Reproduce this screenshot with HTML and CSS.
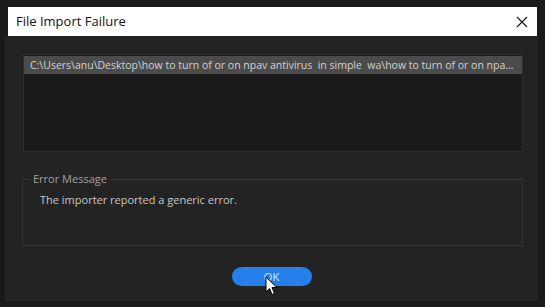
FILE: index.html
```html
<!DOCTYPE html>
<html>
<head>
<meta charset="utf-8">
<link rel="stylesheet" href="styles.css">
</head>
<body>
<div class="screen">
  <div class="titlebar">
    <span class="title">File Import Failure</span>
    <svg class="close" width="12" height="12" viewBox="0 0 12 12"><path d="M1 1L11 11M11 1L1 11" stroke="#111" stroke-width="1.1" fill="none"/></svg>
  </div>
  <div class="panel">
    <div class="list">
      <div class="row sel">C:\Users\anu\Desktop\how to turn of or on npav antivirus&nbsp; in simple&nbsp; wa\how to turn of or on npa...</div>
    </div>
    <fieldset class="group">
      <legend>Error Message</legend>
      <div class="msg">The importer reported a generic error.</div>
    </fieldset>
    <div class="actions">
      <div class="btnwrap">
        <button class="ok">OK</button>
        <svg class="cursor" width="14" height="20" viewBox="0 0 14 20"><path d="M1 1L1 16L4.5 12.5L7 18.5L9.5 17.5L7 11.5L12 11.5Z" fill="#fff" stroke="#000" stroke-width="1"/></svg>
      </div>
    </div>
  </div>
</div>
</body>
</html>
```
FILE: styles.css
```css
html, body {
  margin: 0;
  padding: 0;
  background: #1b1b1b;
  width: 545px;
  height: 307px;
  overflow: hidden;
  font-family: "Open Sans", "Noto Sans", sans-serif;
}
.screen {
  padding: 7px 8px 0 8px;
  display: flex;
  flex-direction: column;
}
.titlebar {
  height: 29px;
  background: #fff;
  display: flex;
  align-items: center;
  justify-content: space-between;
  padding: 0 9px 0 8px;
}
.title {
  font-size: 13px;
  color: #111;
  margin-top: -1px;
}
.close {
  display: block;
}
.panel {
  background: #232323;
  margin: 0 -1px 0 -3px;
  height: 265px;
  padding: 18px 15px 0 18px;
  box-sizing: border-box;
  display: flex;
  flex-direction: column;
}
.list {
  height: 98px;
  background: #1b1b1b;
  border: 1px solid #2c2c2c;
  box-sizing: border-box;
  padding: 1px 0 0 0;
}
.row {
  height: 18px;
  line-height: 18px;
  font-size: 10.5px;
  padding-left: 6px;
  color: #d2d2d2;
  white-space: nowrap;
  overflow: hidden;
}
.sel {
  background: #4b4b4b;
}
.group {
  margin: 20px 0 0 -1px;
  padding: 0 0 0 16px;
  height: 74px;
  box-sizing: border-box;
  border: 1px solid #343434;
  border-top-color: #3a3a3a;
}
.group legend {
  font-size: 11px;
  color: #a2a2a2;
  padding: 0 3px;
  margin-left: -9px;
  line-height: 14px;
}
.msg {
  font-size: 11px;
  color: #c6c6c6;
  margin-top: 6px;
  padding-left: 1px;
}
.actions {
  display: flex;
  justify-content: center;
  margin-top: 18px;
  padding-right: 3px;
}
.btnwrap {
  position: relative;
}
.ok {
  width: 80px;
  height: 19px;
  border: none;
  border-radius: 10px;
  background: #2680eb;
  color: #d6e8fb;
  font-family: "Open Sans", "Noto Sans", sans-serif;
  font-size: 11px;
  padding: 0;
  line-height: 19px;
}
.cursor {
  position: absolute;
  left: 33px;
  top: 12px;
}
```
